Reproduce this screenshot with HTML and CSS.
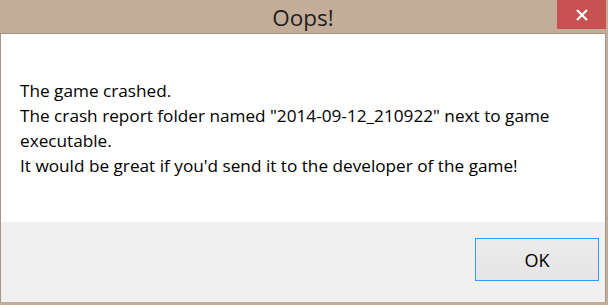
FILE: index.html
```html
<!DOCTYPE html>
<html>
<head>
<meta charset="utf-8">
<link rel="stylesheet" href="styles.css">
</head>
<body>
<div class="window">
  <div class="titlebar">
    <div class="title">Oops!</div>
    <div class="close">
      <svg width="12" height="12" viewBox="0 0 12 12"><path d="M1 1 L11 11 M11 1 L1 11" stroke="#fff" stroke-width="2.2" fill="none"/></svg>
    </div>
  </div>
  <div class="client">
    <div class="message">
      <p>The game crashed.<br>The crash report folder named "2014-09-12_210922" next to game<br>executable.<br>It would be great if you'd send it to the developer of the game!</p>
    </div>
    <div class="footer">
      <button class="ok">OK</button>
    </div>
  </div>
</div>
</body>
</html>
```
FILE: styles.css
```css
html, body {
  margin: 0;
  padding: 0;
}
body {
  width: 608px;
  height: 305px;
  overflow: hidden;
  font-family: "Open Sans", "Noto Sans", sans-serif;
}
.window {
  width: 608px;
  height: 305px;
  box-sizing: border-box;
  background: #c3ad99;
  padding: 0 2px 3px 0;
  display: flex;
  flex-direction: column;
}
.titlebar {
  height: 33px;
  display: grid;
  grid-template-columns: 1fr auto 1fr;
  align-items: start;
}
.title {
  grid-column: 2;
  font-size: 22.5px;
  line-height: 35px;
  color: #1e1e1e;
}
.close {
  grid-column: 3;
  justify-self: end;
  width: 49px;
  height: 29px;
  background: #c75050;
  display: flex;
  align-items: center;
  justify-content: center;
}
.client {
  flex: 1;
  display: flex;
  flex-direction: column;
  border: 1px solid #a5968a;
  border-bottom: none;
  background: #fff;
}
.message {
  flex: 1;
  padding: 44px 0 0 19px;
}
.message p {
  margin: 0;
  font-size: 17.2px;
  line-height: 25px;
  color: #000;
  white-space: nowrap;
}
.footer {
  height: 80px;
  background: #f0f0f0;
  display: flex;
  justify-content: flex-end;
  align-items: flex-start;
  padding: 16px 6px 0 0;
  box-sizing: border-box;
}
.ok {
  width: 124px;
  height: 43px;
  border: 1px solid #3399ff;
  background: linear-gradient(#ececec, #e5e5e5);
  font-family: "Open Sans", "Noto Sans", sans-serif;
  font-size: 18px;
  color: #000;
  padding: 0;
}
```
